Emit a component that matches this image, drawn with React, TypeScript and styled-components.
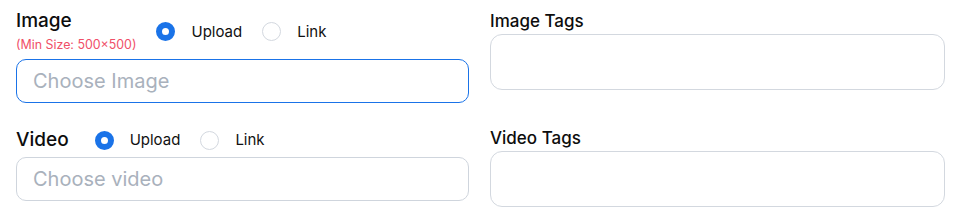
import { FC } from "react";
import styled, { createGlobalStyle } from "styled-components";

const GlobalStyle = createGlobalStyle`
    body {
        margin: 0;
        background: #ffffff;
        font-family: Inter, "Noto Sans", sans-serif;
        color: #111111;
    }
`;

type RadioOption = { label: string; checked: boolean };

const RadioGroup: FC<{ options: RadioOption[] }> = ({ options }) => (
    <StyledRadioGroup>
        {options.map((option) => (
            <StyledRadioItem key={option.label}>
                <StyledRadio $checked={option.checked} />
                <span>{option.label}</span>
            </StyledRadioItem>
        ))}
    </StyledRadioGroup>
);

const App: FC = () => {
    return (
        <>
            <GlobalStyle />
            <StyledForm>
                <StyledField>
                    <StyledHeader $gap={20}>
                        <div>
                            <StyledMediaLabel>Image</StyledMediaLabel>
                            <StyledHint>(Min Size: 500×500)</StyledHint>
                        </div>
                        <RadioGroup
                            options={[
                                { label: "Upload", checked: true },
                                { label: "Link", checked: false },
                            ]}
                        />
                    </StyledHeader>
                    <StyledInput $focused placeholder="Choose Image" />
                </StyledField>

                <StyledField>
                    <StyledTagLabel>Image Tags</StyledTagLabel>
                    <StyledTagBox />
                </StyledField>

                <StyledField>
                    <StyledHeader $gap={26}>
                        <StyledMediaLabel>Video</StyledMediaLabel>
                        <RadioGroup
                            options={[
                                { label: "Upload", checked: true },
                                { label: "Link", checked: false },
                            ]}
                        />
                    </StyledHeader>
                    <StyledInput placeholder="Choose video" />
                </StyledField>

                <StyledField $shift={-2}>
                    <StyledTagLabel>Video Tags</StyledTagLabel>
                    <StyledTagBox />
                </StyledField>
            </StyledForm>
        </>
    );
};

export default App;

const StyledForm = styled.div`
    display: grid;
    grid-template-columns: 453fr 455fr;
    column-gap: 21px;
    row-gap: 26px;
    padding: 10px 18px 0 16px;
`;

const StyledField = styled.div<{ $shift?: number }>`
    display: flex;
    flex-direction: column;
    min-width: 0;
    margin-top: ${(p) => p.$shift ?? 0}px;
`;

const StyledHeader = styled.div<{ $gap: number }>`
    display: flex;
    align-items: center;
    gap: ${(p) => p.$gap}px;
    margin-bottom: 6px;
`;

const StyledMediaLabel = styled.div`
    font-size: 19px;
    line-height: 22px;
    font-weight: 500;
    color: #0d0d0d;
`;

const StyledHint = styled.div`
    margin-top: 5px;
    font-size: 12.4px;
    line-height: 16px;
    color: #f04f68;
`;

const StyledRadioGroup = styled.div`
    display: flex;
    align-items: center;
    gap: 20px;
`;

const StyledRadioItem = styled.label`
    display: flex;
    align-items: center;
    gap: 16px;
    font-size: 15px;
    line-height: 20px;
    color: #111111;
`;

const StyledRadio = styled.span<{ $checked: boolean }>`
    box-sizing: border-box;
    width: 19px;
    height: 19px;
    border-radius: 50%;
    border: ${(p) => (p.$checked ? "6px solid #1a73e8" : "1px solid #d3d8df")};
    background: #ffffff;
`;

const StyledInput = styled.input<{ $focused?: boolean }>`
    box-sizing: border-box;
    width: 100%;
    height: 44px;
    padding: 0 16px;
    border: 1px solid ${(p) => (p.$focused ? "#1a73e8" : "#cfd5dd")};
    border-radius: 10px;
    font-family: Inter, "Noto Sans", sans-serif;
    font-size: 20px;
    color: #111111;
    outline: none;
    background: #ffffff;

    &::placeholder {
        color: #a9b1bc;
    }
`;

const StyledTagLabel = styled.div`
    font-size: 17px;
    line-height: 22px;
    font-weight: 500;
    color: #0d0d0d;
    margin-bottom: 2px;
`;

const StyledTagBox = styled.div`
    box-sizing: border-box;
    height: 56px;
    border: 1px solid #d3d8df;
    border-radius: 12px;
    background: #ffffff;
`;
